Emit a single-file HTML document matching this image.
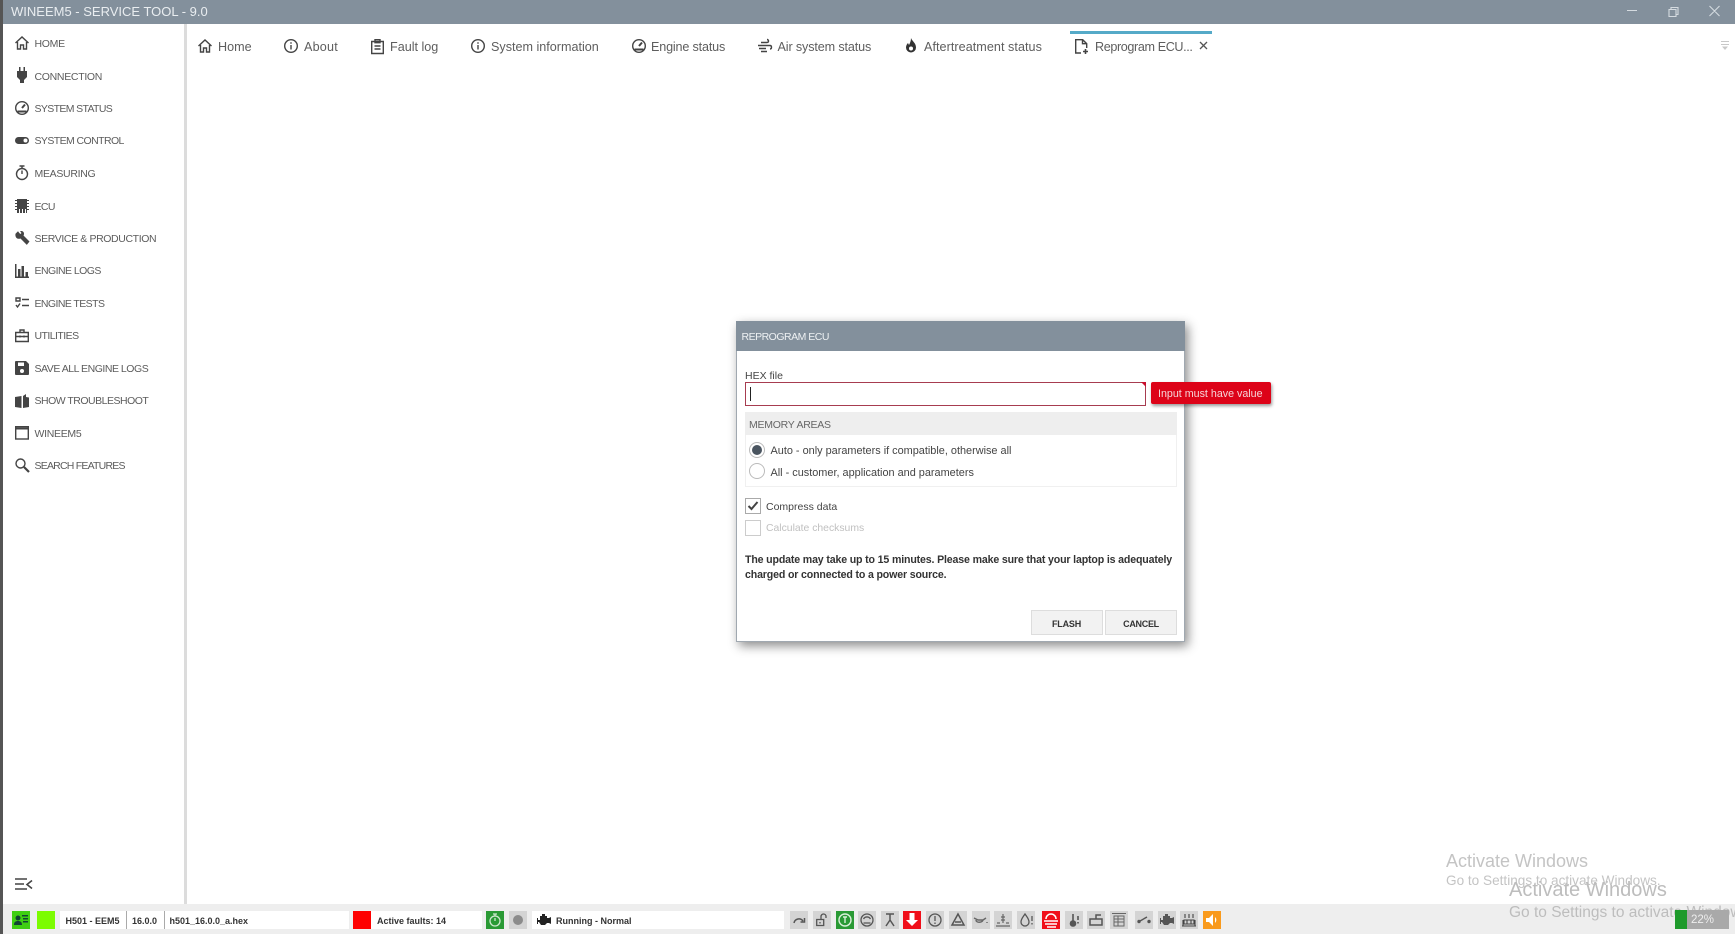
<!DOCTYPE html>
<html><head><meta charset="utf-8"><title>WINEEM5 - SERVICE TOOL</title>
<style>
*{box-sizing:border-box;margin:0;padding:0}
html,body{width:1735px;height:934px;overflow:hidden;background:#fff;font-family:"Liberation Sans",sans-serif;color:#555}
#w{position:absolute;left:0;top:0;width:1735px;height:934px;overflow:hidden;filter:blur(.3px)}
.a{position:absolute}
.t{position:absolute;white-space:nowrap;line-height:14px}
.nav{font-size:10.5px;color:#5c5c5c;left:34.5px;letter-spacing:-.3px}
.tab{font-size:12.6px;color:#5e5e5e;top:40px}
svg{position:absolute;overflow:visible}
.ic{fill:none;stroke:#444;stroke-width:1.4}
.sq{position:absolute;top:911px;width:18px;height:18px;background:#d4d4d4}
.b{font-weight:bold;font-size:9px;color:#333;top:913.5px}
.wm{color:#c4c4c4}
</style></head><body><div id="w">
<div class="a" style="left:0;top:0;width:3px;height:934px;background:#555"></div>
<div class="a" style="left:3px;top:0;width:1732px;height:24px;background:#83909c"></div>
<div class="t" style="left:11px;top:4px;font-size:13px;line-height:15px;color:#e9edf0">WINEEM5 - SERVICE TOOL - 9.0</div>
<svg style="left:1625px;top:4px" width="100" height="14" fill="none" stroke="#d5dbe0" stroke-width="1.1"><path d="M2 6.500h10M44 5.500h7v7h-7zM46 5.500v-2h7v7h-2M84.500 2l10 10M94.500 2l-10 10"/></svg>

<div class="a" style="left:184px;top:24px;width:3px;height:880px;background:#dcdcdc"></div>

<div class="t nav" style="top:36.5px">HOME</div><div class="t nav" style="top:69.5px">CONNECTION</div>
<div class="t nav" style="top:101.5px;letter-spacing:-.64px">SYSTEM STATUS</div><div class="t nav" style="top:134px;letter-spacing:-.58px">SYSTEM CONTROL</div>
<div class="t nav" style="top:166.5px">MEASURING</div><div class="t nav" style="top:199.5px;letter-spacing:-.6px">ECU</div>
<div class="t nav" style="top:231.5px;letter-spacing:-.38px">SERVICE &amp; PRODUCTION</div><div class="t nav" style="top:264px;letter-spacing:-.55px">ENGINE LOGS</div>
<div class="t nav" style="top:296.5px;letter-spacing:-.58px">ENGINE TESTS</div><div class="t nav" style="top:329px;letter-spacing:-.55px">UTILITIES</div>
<div class="t nav" style="top:361.5px;letter-spacing:-.47px">SAVE ALL ENGINE LOGS</div><div class="t nav" style="top:394px;letter-spacing:-.5px">SHOW TROUBLESHOOT</div>
<div class="t nav" style="top:426.5px">WINEEM5</div><div class="t nav" style="top:459px;letter-spacing:-.78px">SEARCH FEATURES</div>

<svg class="ic" style="left:15px;top:36px" width="14" height="14"><path d="M.5 7L7 1l6.500 6M2.500 6v7h3V9h3v4h3V6"/></svg>
<svg style="left:16px;top:67px" width="12" height="16" fill="#444"><path d="M3 0h1.500v4H3zM7.500 0H9v4H7.500zM1 4h10v6l-3 3v3H4v-3L1 10z"/></svg>
<svg class="ic" style="left:15px;top:101px" width="14" height="14"><circle cx="7" cy="7" r="6.300"/><path d="M7 7l3-3.500M2.500 10.500h9" stroke-width="2"/></svg>
<svg style="left:15px;top:137px" width="14" height="8"><rect width="14" height="7" rx="3.500" fill="#444"/><circle cx="10.500" cy="3.500" r="2" fill="#fff"/></svg>
<svg class="ic" style="left:15px;top:165px" width="14" height="16"><circle cx="7" cy="9" r="5.500"/><path d="M4.500 1h5M7 1v2.500M7 9V5.500"/></svg>
<svg style="left:15px;top:199px" width="14" height="14" fill="#444"><path d="M2 0h10v14H2z"/><path d="M0 1.500h14M0 4.500h14M0 7.500h14M0 10.500h14" stroke="#444"/><path d="M4 10h1v4H4zM7 10h1v4H7zM10 10h1v4h-1z" fill="#fff"/></svg>
<svg style="left:15px;top:231px" width="15" height="15" fill="#444"><path d="M.5 3L3 .5l1.500 2 1 .8 1-1L5 .5C7-.3 9 .8 9 3c0 .8-.2 1.300-.5 1.800l6 6-2.700 3.400-6.300-6.400C4.800 8 4 8.200 3.300 8 1.200 7.800 0 5.500.5 3z" transform="translate(0 -.3)"/></svg>
<svg style="left:15px;top:264px" width="14" height="14" fill="#444"><path d="M0 0h1.500v13H0zM3 5h2.500v8H3zM6.500 2H9v11H6.500zM10.500 8H13v5h-2.500zM0 12.500h14V14H0z"/></svg>
<svg class="ic" style="left:15px;top:297px" width="14" height="12"><path d="M1 1h4v3H1zM7 2.500h7M1 8l1.500 2L5 6.500M7 8.500h7"/></svg>
<svg class="ic" style="left:15px;top:329px" width="14" height="13"><path d="M.7 3.500h12.600v9H.7zM5 3.500V1h4v2.500M.7 7.500h12.600M5 6.500v2M9 6.500v2"/></svg>
<svg style="left:15px;top:361px" width="14" height="14"><path d="M1 0h10l3 3v10a1 1 0 0 1-1 1H1a1 1 0 0 1-1-1V1a1 1 0 0 1 1-1z" fill="#444"/><path d="M3 1.500h6v3.500H3z" fill="#fff"/><circle cx="7" cy="10" r="2" fill="#fff"/></svg>
<svg style="left:15px;top:394px" width="15" height="14" fill="#444"><path d="M0 3l6.500-1v12L0 13zM8 2l3-2v3l3 .5V13l-6 1z"/></svg>
<svg class="ic" style="left:15px;top:426px" width="14" height="14"><rect x=".7" y=".7" width="12.600" height="12.300"/><path d="M.7 2.500h12.600" stroke-width="2"/></svg>
<svg class="ic" style="left:15px;top:458px" width="14" height="14" stroke-width="1.700"><circle cx="5.500" cy="5.500" r="4.500"/><path d="M9 9l5 5" stroke-width="2.200"/></svg>
<svg style="left:15px;top:878px" width="18" height="13" stroke="#444" stroke-width="1.600" fill="none"><path d="M0 1h12M0 6h9M0 11h12M17 2.500l-5 4 5 4"/></svg>

<!-- tabs -->
<svg class="ic" style="left:198px;top:39px" width="14" height="14"><path d="M.5 7L7 1l6.500 6M2.500 6v7h3V9h3v4h3V6"/></svg>
<div class="t tab" style="left:218px">Home</div>
<svg class="ic" style="left:284px;top:39px" width="14" height="14"><circle cx="7" cy="7" r="6.300"/><path d="M7 6v4.500M7 3.200v1.600"/></svg>
<div class="t tab" style="left:304px;letter-spacing:.2px">About</div>
<svg class="ic" style="left:371px;top:39px" width="13" height="15"><path d="M.7 2.500h11.600v12H.7zM4 .7h5v3H4zM3.500 7h6M3.500 10h6"/></svg>
<div class="t tab" style="left:390px">Fault log</div>
<svg class="ic" style="left:471px;top:39px" width="14" height="14"><circle cx="7" cy="7" r="6.300"/><path d="M7 6v4.500M7 3.200v1.600"/></svg>
<div class="t tab" style="left:491px">System information</div>
<svg class="ic" style="left:632px;top:39px" width="14" height="14"><circle cx="7" cy="7" r="6.300"/><path d="M7 7l3-3.500M2.500 10.500h9" stroke-width="2"/></svg>
<div class="t tab" style="left:651px;letter-spacing:-.17px">Engine status</div>
<svg class="ic" style="left:758px;top:39px" width="14" height="14"><path d="M3 3.500h6c2 0 2-3 0-3M0 6.500h12c2 0 2 3.500 0 3.500M1 9.500h7M3 12.500h6"/></svg>
<div class="t tab" style="left:777.5px;letter-spacing:-.13px">Air system status</div>
<svg style="left:905px;top:38px" width="12" height="15" fill="#333"><path d="M6 0c1 3 5 5 5 9.500A5 5 0 0 1 1 9.500C1 7.500 2 6 3 5l1 2C5 5 6 3 6 0z"/><circle cx="6" cy="10.500" r="2" fill="#fff"/></svg>
<div class="t tab" style="left:924px;letter-spacing:.05px">Aftertreatment status</div>
<div class="a" style="left:1070px;top:31px;width:142px;height:3px;background:#55aac8"></div>
<svg class="ic" style="left:1075px;top:39px" width="13" height="15"><path d="M6 14H.7V.7h7l4 4V9M7.500.7v4h4"/><path d="M8 12.500h5M10.500 10v5" stroke-width="1.600"/></svg>
<div class="t tab" style="left:1095px;letter-spacing:-.38px">Reprogram ECU...</div>
<svg style="left:1199.5px;top:42px" width="8" height="8" stroke="#555" stroke-width="1.300"><path d="M0 0l7 7M7 0L0 7"/></svg>
<svg style="left:1720px;top:41px" width="10" height="9" stroke="#c8c8c8"><path d="M1 .5h8M1 3.500h8"/><path d="M2 5.500h6L5 9z" fill="#c8c8c8" stroke="none"/></svg>

<!-- dialog -->
<div class="a" style="left:736px;top:320.500px;width:449px;height:321.500px;background:#fff;border:1px solid #a0a8b0;box-shadow:3px 4px 10px rgba(0,0,0,.45)"></div>
<div class="a" style="left:736px;top:320.500px;width:449px;height:30.500px;background:#83909c"></div>
<div class="t" style="left:741.5px;top:330px;font-size:10.5px;color:#eef1f3;letter-spacing:-.5px">REPROGRAM ECU</div>
<div class="t" style="left:745px;top:369px;font-size:10.5px;color:#444">HEX file</div>
<div class="a" style="left:745px;top:382px;width:401px;height:24px;border:1px solid #a73c50"></div>
<div class="a" style="left:750px;top:387px;width:1px;height:14px;background:#222"></div>
<div class="a" style="left:1141px;top:382px;border-top:5px solid #c8102e;border-left:5px solid transparent"></div>
<div class="a" style="left:1151px;top:382px;width:120px;height:22px;background:#dd0318;border-radius:2px;box-shadow:1px 2px 3px rgba(0,0,0,.4)"></div>
<div class="t" style="left:1158px;top:387px;font-size:10.7px;color:#f5d5d8">Input must have value</div>
<div class="a" style="left:745px;top:412px;width:432px;height:75px;border:1px solid #f0f0f0"></div>
<div class="a" style="left:745px;top:412px;width:432px;height:23px;background:#eeeeee"></div>
<div class="t" style="left:749px;top:418px;font-size:10.5px;color:#666;letter-spacing:-.25px">MEMORY AREAS</div>
<div class="a" style="left:749px;top:442px;width:16px;height:16px;border-radius:50%;border:1px solid #bbb"></div>
<div class="a" style="left:752px;top:445px;width:10px;height:10px;border-radius:50%;background:#4a5560"></div>
<div class="a" style="left:749px;top:463px;width:16px;height:16px;border-radius:50%;border:1px solid #bbb"></div>
<div class="t" style="left:770.5px;top:444px;font-size:10.9px;color:#444">Auto - only parameters if compatible, otherwise all</div>
<div class="t" style="left:770.5px;top:465.5px;font-size:10.9px;color:#444">All - customer, application and parameters</div>
<div class="a" style="left:745px;top:498px;width:16px;height:16px;border:1px solid #aaa"></div>
<svg style="left:747px;top:501px" width="12" height="10" fill="none" stroke="#444" stroke-width="2"><path d="M1.500 5l3 3 6-7"/></svg>
<div class="t" style="left:766px;top:499.5px;font-size:10.5px;color:#444">Compress data</div>
<div class="a" style="left:745px;top:520px;width:16px;height:16px;border:1px solid #ccc"></div>
<div class="t" style="left:766px;top:521.5px;font-size:10.4px;color:#c0c0c0">Calculate checksums</div>
<div class="t" style="left:745px;top:552.5px;font-size:10.6px;font-weight:bold;color:#333;letter-spacing:-.15px">The update may take up to 15 minutes. Please make sure that your laptop is adequately</div>
<div class="t" style="left:745px;top:567.5px;font-size:10.6px;font-weight:bold;color:#333;letter-spacing:-.15px">charged or connected to a power source.</div>
<div class="a" style="left:1031px;top:610px;width:72px;height:25px;background:#f2f2f2;border:1px solid #ddd"></div>
<div class="a" style="left:1105px;top:610px;width:72px;height:25px;background:#f2f2f2;border:1px solid #ddd"></div>
<div class="t" style="left:1030.5px;top:616.5px;width:72px;text-align:center;font-size:9px;font-weight:bold;color:#333;letter-spacing:-.2px">FLASH</div>
<div class="t" style="left:1105px;top:616.5px;width:72px;text-align:center;font-size:9px;font-weight:bold;color:#333;letter-spacing:-.3px">CANCEL</div>

<!-- watermark 1 -->
<div class="t wm" style="left:1446px;top:851px;font-size:18px;line-height:20px">Activate Windows</div>
<div class="t wm" style="left:1446px;top:873px;font-size:13.6px;line-height:16px">Go to Settings to activate Windows.</div>

<!-- status bar -->
<div class="a" style="left:3px;top:904px;width:1732px;height:30px;background:#eeeeee"></div>
<div class="t wm" style="left:1509px;top:879px;font-size:20px;line-height:22px;color:#bdbdbd">Activate Windows</div>
<div class="t wm" style="left:1509px;top:904px;font-size:15.5px;line-height:18px;color:#bdbdbd">Go to Settings to activate Windows.</div>
<div class="a" style="left:12px;top:911px;width:18px;height:18px;background:#3fcf12"></div>
<svg style="left:14px;top:914px" width="14" height="12" fill="#143"><circle cx="4" cy="4" r="2.500"/><path d="M0 11c0-3 1.500-4 4-4s4 1 4 4zM8 1h6v1.500H8zM9 4h5v1.500H9zM9 7h5v1.500H9z"/></svg>
<div class="a" style="left:37px;top:911px;width:18px;height:18px;background:#7cfc00"></div>
<div class="a" style="left:60px;top:911px;width:289px;height:18px;background:#fff"></div>
<div class="a" style="left:126px;top:911px;width:1px;height:18px;background:#aaa"></div>
<div class="a" style="left:164px;top:911px;width:1px;height:18px;background:#aaa"></div>
<div class="t b" style="left:65.5px">H501 - EEM5</div>
<div class="t b" style="left:132px">16.0.0</div>
<div class="t b" style="left:169.5px">h501_16.0.0_a.hex</div>
<div class="a" style="left:353px;top:911px;width:18px;height:18px;background:#fe0000"></div>
<div class="a" style="left:371px;top:911px;width:111px;height:18px;background:#fff"></div>
<div class="t b" style="left:377px">Active faults: 14</div>
<div class="a" style="left:486px;top:911px;width:18px;height:18px;background:#2a9a35"></div>
<svg style="left:489px;top:913px" width="12" height="14" fill="none" stroke="#cfe8cf" stroke-width="1.300"><circle cx="6" cy="8" r="5"/><path d="M4 1h4M6 1v2M6 8V5"/></svg>
<div class="sq" style="left:509px"></div>
<div class="a" style="left:513px;top:915px;width:10px;height:10px;border-radius:50%;background:#8c8c8c"></div>
<div class="a" style="left:532px;top:911px;width:252px;height:18px;background:#fff"></div>
<svg style="left:537px;top:914px" width="14" height="12" fill="#222"><path d="M3 2h7v2h2l2-1v7l-2-1h-2l-2 2H4L2 8H1v2H0V4h1v2h2zM5 0h3v2H5z"/></svg>
<div class="t b" style="left:556px">Running - Normal</div>

<div class="sq" style="left:790px"></div>
<svg style="left:793px;top:916px" width="13" height="8" fill="none" stroke="#555" stroke-width="1.500"><path d="M1 7a5 5 0 0 1 9-2M11.500 2v4h-4"/></svg>
<div class="sq" style="left:813px"></div>
<svg style="left:816px;top:913px" width="12" height="13" fill="none" stroke="#555" stroke-width="1.300"><path d="M.7 6.500h7v6h-7zM5 6.500V3.500a2.500 2.500 0 0 1 5 0V5M4 9v1.500"/></svg>
<div class="sq" style="left:836px;background:#2a9a35"></div>
<svg style="left:838px;top:913px" width="14" height="14" fill="none" stroke="#d9f0d9" stroke-width="1.400"><circle cx="7" cy="7" r="6"/><path d="M5 4h4M7 4v6"/></svg>
<div class="sq" style="left:858px"></div>
<svg style="left:860px;top:913px" width="14" height="14" fill="none" stroke="#555" stroke-width="1.300"><circle cx="7" cy="7" r="6"/><path d="M3.500 6a4 4 0 0 1 7 0M3.500 10h7"/></svg>
<div class="sq" style="left:881px"></div>
<svg style="left:884px;top:913px" width="12" height="14" fill="none" stroke="#555" stroke-width="1.500"><path d="M2 1h8M6 1v6M6 7L2 13M6 7l4 6" /></svg>
<div class="sq" style="left:903px;background:#f00f1a"></div>
<svg style="left:905px;top:913px" width="14" height="14" fill="#fff"><path d="M4.500 0h5v7H13l-6 6-6-6h3.500z"/></svg>
<div class="sq" style="left:926px"></div>
<svg style="left:928px;top:913px" width="14" height="14" fill="none" stroke="#555" stroke-width="1.300"><circle cx="7" cy="7" r="6"/><path d="M7 3v5M7 9.500v1.500"/></svg>
<div class="sq" style="left:949px"></div>
<svg style="left:951px;top:913px" width="14" height="13" fill="none" stroke="#555" stroke-width="1.500"><path d="M7 1l6 11H1zM4 9h6"/></svg>
<div class="sq" style="left:972px"></div>
<svg style="left:974px;top:915px" width="14" height="10" fill="none" stroke="#666" stroke-width="1.400"><path d="M0 3l4 2h5l3-2M2 5c0 3 6 3 7 0M13 7v1"/></svg>
<div class="sq" style="left:994px"></div>
<svg style="left:996px;top:913px" width="14" height="14" fill="none" stroke="#666" stroke-width="1.200"><path d="M7 1v9M5 4h4M5 7h4M1 10h3M10 10h3M0 13h14"/></svg>
<div class="sq" style="left:1017px"></div>
<svg style="left:1020px;top:913px" width="13" height="14" fill="none" stroke="#555" stroke-width="1.300"><path d="M5 1c2 3 4 5 4 8a4 4 0 0 1-8 0c0-3 2-5 4-8zM12 3v5M12 10v1.500"/></svg>
<div class="sq" style="left:1042px;background:#f00f1a"></div>
<svg style="left:1044px;top:913px" width="14" height="14" fill="none" stroke="#fff" stroke-width="1.500"><path d="M2 6a5 5 0 0 1 10 0M0 8h14M1 11h12M3 14h9"/></svg>
<div class="sq" style="left:1065px"></div>
<svg style="left:1069px;top:913px" width="11" height="14" fill="none" stroke="#555" stroke-width="1.600"><circle cx="4" cy="10.500" r="2.500" fill="#555"/><path d="M4 8V1M9 3v4M9 9v1.500"/></svg>
<div class="sq" style="left:1087px"></div>
<svg style="left:1089px;top:914px" width="14" height="12" fill="none" stroke="#555" stroke-width="1.500"><path d="M1 5h12v6H1zM7 5V1h5"/></svg>
<div class="sq" style="left:1110px"></div>
<svg style="left:1112px;top:913px" width="14" height="14" fill="none" stroke="#666" stroke-width="1"><path d="M0 .5h14M2 3h10v10H2zM2 6h10M2 9h10M6 3v10"/></svg>
<div class="sq" style="left:1135px"></div>
<svg style="left:1137px;top:916px" width="14" height="8" fill="none" stroke="#555" stroke-width="1.400"><circle cx="2" cy="5.500" r="1" fill="#555"/><circle cx="12" cy="5.500" r="1" fill="#555"/><path d="M3 5l7-4"/></svg>
<div class="sq" style="left:1158px"></div>
<svg style="left:1160px;top:914px" width="14" height="12" fill="#555"><path d="M3 2h7v2h2l2-1v7l-2-1h-2l-2 2H4L2 8H1v2H0V4h1v2h2zM5 0h3v2H5z"/></svg>
<div class="sq" style="left:1180px"></div>
<svg style="left:1182px;top:913px" width="14" height="14" fill="none" stroke="#444" stroke-width="1.100"><path d="M3 1v4M7 1v4M11 1v4M2 7h10v4H2zM0 13h14M1 7v6M13 7v6M5 7v4M9 7v4"/></svg>
<div class="sq" style="left:1203px;background:#f99a1c"></div>
<svg style="left:1205px;top:913px" width="14" height="14" fill="#fff"><path d="M1 5h3l4-4v12l-4-4H1z"/><path d="M10 4a4 4 0 0 1 0 6z"/></svg>

<div class="a" style="left:1675px;top:910px;width:54px;height:19px;background:#a9a9a9"></div>
<div class="a" style="left:1675px;top:910px;width:12px;height:19px;background:#1e9a2b"></div>
<div class="t" style="left:1691px;top:913px;font-size:11.5px;color:#eee">22%</div>
</div></body></html>
